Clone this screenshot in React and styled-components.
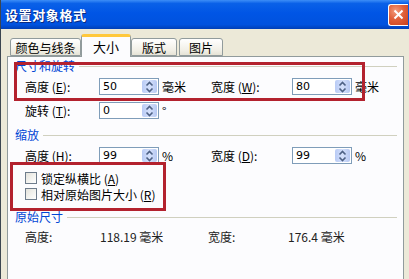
import React from 'react';
import styled, { createGlobalStyle } from 'styled-components';

const GlobalStyle = createGlobalStyle`
  html, body {
    margin: 0;
    padding: 0;
    background: #ece9d8;
  }
  body {
    font-family: "Noto Sans CJK SC", "Liberation Sans", sans-serif;
    font-size: 12px;
    color: #000;
  }
`;

const Window = styled.div`
  width: 409px;
  height: 279px;
  overflow: hidden;
  display: flex;
  flex-direction: column;
  background: #ece9d8;
  border-left: 1px solid #3c4650;
  box-sizing: border-box;
`;

const TitleBar = styled.div`
  height: 29px;
  flex-shrink: 0;
  display: flex;
  align-items: center;
  justify-content: space-between;
  padding: 0 1px 0 4px;
  background: linear-gradient(#3d8ef7 0%, #0a61e8 12%, #0055e5 45%, #0052de 85%, #003fb6 100%);
`;

const Title = styled.div`
  color: #fff;
  font-weight: bold;
  font-size: 13px;
  letter-spacing: 0.6px;
  text-shadow: 1px 1px 0 #0a2a80;
`;

const CloseButton = styled.div`
  width: 19px;
  height: 20px;
  border: 1px solid #fff;
  border-right: none;
  border-radius: 3px 0 0 3px;
  background: radial-gradient(circle at 35% 30%, #f39b7c 0%, #e0603a 45%, #c8401d 100%);
  display: flex;
  align-items: center;
  justify-content: center;
`;

const Body = styled.div`
  flex: 1;
  display: flex;
  flex-direction: column;
  padding: 5px 5px 0 6px;
`;

const TabRow = styled.div`
  display: flex;
  align-items: flex-end;
  height: 22px;
  padding-left: 2px;
  position: relative;
  z-index: 2;
`;

const Tab = styled.div`
  box-sizing: border-box;
  width: ${p => p.$w}px;
  margin-left: ${p => p.$ml || 0}px;
  height: ${p => (p.$active ? 23 : 18)}px;
  display: flex;
  align-items: center;
  justify-content: center;
  font-size: ${p => (p.$active ? 13 : 12)}px;
  border: 1px solid #919b9c;
  border-bottom: ${p => (p.$active ? 'none' : '1px solid #919b9c')};
  border-top: ${p => (p.$active ? '3px solid #ffc83c' : '1px solid #919b9c')};
  border-radius: 3px 3px 0 0;
  background: ${p => (p.$active ? '#fcfcfe' : 'linear-gradient(#ffffff, #f1efe6 70%, #e6e3d6)')};
  margin-bottom: ${p => (p.$active ? -1 : 0)}px;
  padding-bottom: ${p => (p.$active ? 2 : 0)}px;
`;

const Panel = styled.div`
  flex: 1;
  position: relative;
  background: #fcfcfe;
  border: 1px solid #919b9c;
  border-bottom: none;
  padding: 0 6px 0 7px;
  display: flex;
  flex-direction: column;
`;

const GroupHeader = styled.div`
  height: 14px;
  margin-top: ${p => p.$mt}px;
  display: flex;
  align-items: center;
  color: #0046d5;
  &::after {
    content: '';
    flex: 1;
    height: 1px;
    margin: 2px 0 0 4px;
    background: #d0d0bf;
  }
`;

const FieldRow = styled.div`
  display: grid;
  grid-template-columns: 74px 60px 52px 81px 60px 1fr;
  align-items: center;
  height: 17px;
  margin-top: ${p => p.$mt}px;
  padding-left: 10px;
`;

const Label = styled.span`
  white-space: nowrap;
  u {
    text-decoration: underline;
    text-underline-offset: 1px;
  }
`;

const Unit = styled.span`
  padding-left: 3px;
`;

const SpinBox = styled.div`
  box-sizing: border-box;
  width: 60px;
  height: 17px;
  border: 1px solid #7f9db9;
  background: #fff;
  display: flex;
  align-items: stretch;
`;

const SpinValue = styled.div`
  flex: 1;
  padding-left: 3px;
  display: flex;
  align-items: center;
  font-family: "DejaVu Sans", "Liberation Sans", sans-serif;
  font-size: 11px;
`;

const SpinButtons = styled.div`
  width: 15px;
  margin: 1px;
  border-radius: 2px;
  background: linear-gradient(90deg, #b9cbf5, #d4e0fb 50%, #b6c8f2);
  display: flex;
  align-items: center;
  justify-content: center;
`;

const CheckList = styled.div`
  display: flex;
  flex-direction: column;
  margin-top: 6px;
  padding-left: 10px;
`;

const CheckRow = styled.div`
  height: 16px;
  display: flex;
  align-items: center;
  gap: 4px;
`;

const CheckBox = styled.span`
  box-sizing: border-box;
  width: 12px;
  height: 12px;
  border: 1px solid #6e7c8c;
  background: linear-gradient(135deg, #e4e3dc, #ffffff);
`;

const InfoRow = styled.div`
  display: grid;
  grid-template-columns: 75px 108px 80px auto;
  align-items: center;
  height: 14px;
  margin-top: 5px;
  padding-left: 10px;
  color: #222;
`;

const Mark = styled.div`
  position: absolute;
  left: ${p => p.$x}px;
  top: ${p => p.$y}px;
  width: ${p => p.$w}px;
  height: ${p => p.$h}px;
  border: 3px solid #b3222e;
  box-sizing: border-box;
  pointer-events: none;
`;

const Spinner = ({ value }) => (
  <SpinBox>
    <SpinValue>{value}</SpinValue>
    <SpinButtons>
      <svg width="9" height="12" viewBox="0 0 9 12">
        <path d="M1.5 4.5 L4.5 1.5 L7.5 4.5" fill="none" stroke="#4d6185" strokeWidth="1.6" />
        <path d="M1.5 7.5 L4.5 10.5 L7.5 7.5" fill="none" stroke="#4d6185" strokeWidth="1.6" />
      </svg>
    </SpinButtons>
  </SpinBox>
);

const Mn = ({ text, k }) => (
  <Label>
    {text} (<u>{k}</u>):
  </Label>
);

export default function App() {
  return (
    <>
      <GlobalStyle />
      <Window>
        <TitleBar>
          <Title>设置对象格式</Title>
          <CloseButton>
            <svg width="11" height="11" viewBox="0 0 11 11">
              <path d="M1.5 1.5 L9.5 9.5 M9.5 1.5 L1.5 9.5" stroke="#fff" strokeWidth="2" />
            </svg>
          </CloseButton>
        </TitleBar>
        <Body>
          <TabRow>
            <Tab $w={71} $ml={1}>颜色与线条</Tab>
            <Tab $w={50} $active>大小</Tab>
            <Tab $w={46}>版式</Tab>
            <Tab $w={44} $ml={2}>图片</Tab>
          </TabRow>
          <Panel>
            <GroupHeader $mt={1}>尺寸和旋转</GroupHeader>
            <FieldRow $mt={6}>
              <Mn text="高度" k="E" />
              <Spinner value="50" />
              <Unit>毫米</Unit>
              <Mn text="宽度" k="W" />
              <Spinner value="80" />
              <Unit>毫米</Unit>
            </FieldRow>
            <FieldRow $mt={7}>
              <Mn text="旋转" k="T" />
              <Spinner value="0" />
              <Unit>°</Unit>
            </FieldRow>

            <GroupHeader $mt={8}>缩放</GroupHeader>
            <FieldRow $mt={6}>
              <Mn text="高度" k="H" />
              <Spinner value="99" />
              <Unit>%</Unit>
              <Mn text="宽度" k="D" />
              <Spinner value="99" />
              <Unit>%</Unit>
            </FieldRow>
            <CheckList>
              <CheckRow>
                <CheckBox />
                <Label>锁定纵横比 (<u>A</u>)</Label>
              </CheckRow>
              <CheckRow>
                <CheckBox />
                <Label>相对原始图片大小 (<u>R</u>)</Label>
              </CheckRow>
            </CheckList>

            <GroupHeader $mt={7}>原始尺寸</GroupHeader>
            <InfoRow>
              <span>高度:</span>
              <span>118.19 毫米</span>
              <span>宽度:</span>
              <span>176.4 毫米</span>
            </InfoRow>

            <Mark $x={6} $y={5} $w={351} $h={39} />
            <Mark $x={2} $y={105} $w={156} $h={49} />
          </Panel>
        </Body>
      </Window>
    </>
  );
}
